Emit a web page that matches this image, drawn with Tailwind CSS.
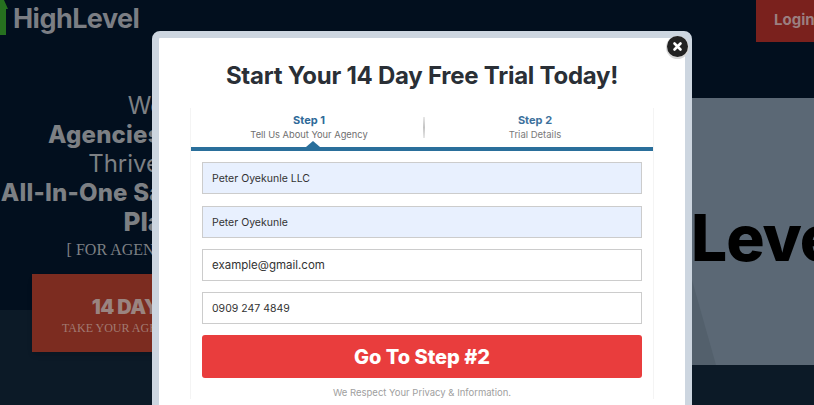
<!DOCTYPE html>
<html lang="en">
<head>
    <meta charset="UTF-8">
    <title>HighLevel - Start Your 14 Day Free Trial</title>
    <script src="https://cdn.jsdelivr.net/npm/@tailwindcss/browser@4"></script>
</head>
<body class="bg-[#020f1e]">
<div class="relative h-[405px] w-[814px] overflow-hidden font-['Inter',sans-serif]">
    <!-- lighter band behind the hero -->
    <div class="absolute bottom-0 left-0 h-[95px] w-full bg-[#0c1a27]"></div>

    <!-- Header -->
    <header class="relative flex h-[42px] items-start justify-between">
        <div class="flex items-start">
            <svg width="9" height="35" viewBox="0 0 9 35"><path d="M0 0h4l4 9H6v26H0z" fill="#26701f"/></svg>
            <span class="ml-[4px] mt-[1px] text-[27px] leading-[36px] font-bold tracking-[-0.55px] text-[#7b7e84]">HighLevel</span>
        </div>
        <a class="block h-[42px] w-[58px] bg-[#7a211d] pl-[18px] text-[15px] leading-[40px] font-bold whitespace-nowrap text-[#9b7f80] overflow-hidden">Login</a>
    </header>

    <!-- Hero -->
    <main class="relative flex">
        <section class="w-[395px] shrink-0 pt-[49px] text-center text-[#7d8084]">
            <p class="pl-[10px] text-[24px] leading-[29px]">We Empower</p>
            <p class="pr-[10px] text-[24px] leading-[29px] font-extrabold tracking-[0.2px] whitespace-nowrap">Agencies &amp; Consultants</p>
            <p class="pl-[20px] text-[24px] leading-[29px]">Thrive With The New</p>
            <p class="pr-[44px] text-[24px] leading-[29px] font-extrabold tracking-[0.2px] whitespace-nowrap">All-In-One Sales &amp; Marketing</p>
            <p class="pr-[38px] text-[26px] leading-[29px] font-extrabold">Platform</p>
            <p class="mt-[3px] pr-[48px] font-['Liberation_Serif',serif] text-[16px] leading-[22px] whitespace-nowrap">[ FOR AGENCIES AND PROS ]</p>
            <div class="mx-[32px] mt-[13px] flex h-[78px] flex-col items-center justify-center bg-[#7c2c20] pt-[3px] shadow-md">
                <p class="pr-[32px] text-[20px] leading-[26px] font-black tracking-[-0.5px] whitespace-nowrap text-[#9a8480]">14 DAY FREE TRIAL</p>
                <p class="font-['Liberation_Serif',serif] text-[12px] leading-[16px] whitespace-nowrap text-[#a17a72]">TAKE YOUR AGENCY TO THE NEXT LEVEL NOW</p>
            </div>
        </section>
        <section class="relative ml-[15px] mt-[56px] h-[267px] flex-1 overflow-hidden bg-[#5b6875]">
            <svg class="absolute bottom-0 left-[282px]" width="24" height="85" viewBox="0 0 24 85"><path d="M0 0 24 85H0z" fill="#53606c"/></svg>
            <span class="absolute top-[105px] left-[281px] text-[64px] leading-[70px] font-extrabold tracking-[-1px] whitespace-nowrap text-black">Level</span>
        </section>
    </main>

    <!-- Trial modal -->
    <div class="absolute top-[31px] left-[152px] h-[420px] w-[540px] rounded-t-[8px] border-[7px] border-[#cdd6e0] bg-white">
        <button class="absolute -top-[2px] -right-[3px] flex h-[21px] w-[21px] items-center justify-center rounded-full bg-[#222222] shadow-[0_1px_0_1px_#d8d8d8]">
            <svg width="11" height="11" viewBox="0 0 11 11"><path d="M2.5 2.5l6 6M8.5 2.5l-6 6" stroke="#fff" stroke-width="2.6" stroke-linecap="round"/></svg>
        </button>
        <h1 class="mt-[22px] text-center text-[24px] leading-[32px] font-bold tracking-[-0.25px] text-[#2a2f36]">Start Your 14 Day Free Trial Today!</h1>

        <div class="mx-[31px] mt-[16px] border-x border-[#f4f4f4]">
            <!-- Steps -->
            <div class="relative flex h-[43px] border-b-4 border-[#2a6f9b] text-center">
                <div class="w-[232px] pt-[5px] pl-[4px]">
                    <p class="text-[11px] leading-[15px] font-bold text-[#2f6a99]">Step 1</p>
                    <p class="text-[9.3px] leading-[14px] text-[#6f6f6f]">Tell Us About Your Agency</p>
                </div>
                <div class="my-[9px] w-[2px] bg-gradient-to-b from-[#e8e8e8] via-[#c4c4c4] to-[#e8e8e8]"></div>
                <div class="flex-1 pt-[5px] pr-[8px]">
                    <p class="text-[11px] leading-[15px] font-bold text-[#3d719c]">Step 2</p>
                    <p class="text-[9.5px] leading-[14px] text-[#7a7a7a]">Trial Details</p>
                </div>
                <span class="absolute bottom-0 left-[115px] h-0 w-0 border-x-[7px] border-b-[6px] border-x-transparent border-b-[#2a6f9b]"></span>
            </div>

            <!-- Form -->
            <form class="mx-[11px] mt-[11px] flex flex-col gap-[11px]">
                <input type="text" value="Peter Oyekunle LLC" class="mb-px h-[32px] w-full border border-[#cccccc] bg-[#e8f0fe] px-[9px] text-[10.5px] text-[#333333]">
                <input type="text" value="Peter Oyekunle" class="h-[32px] w-full border border-[#cccccc] bg-[#e8f0fe] px-[9px] text-[10.5px] text-[#333333]">
                <input type="email" value="example@gmail.com" class="h-[32px] w-full border border-[#cccccc] bg-white px-[9px] text-[11.5px] text-[#333333]">
                <input type="tel" value="0909 247 4849" class="h-[32px] w-full border border-[#cccccc] bg-white px-[9px] text-[10.5px] text-[#333333]">
                <button type="button" class="h-[43px] w-full rounded-[3px] bg-[#e93d3d] text-[20px] font-extrabold text-white">Go To Step #2</button>
            </form>
            <p class="mt-[9px] text-center text-[9.5px] leading-[12px] text-[#a0a0a0]">We Respect Your Privacy &amp; Information.</p>
        </div>
    </div>
</div>
</body>
</html>
